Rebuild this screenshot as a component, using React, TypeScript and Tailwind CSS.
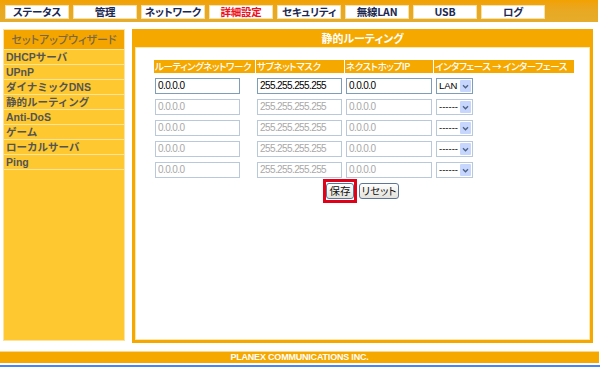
import React from "react";

const jp = "font-['Noto_Sans_CJK_JP','Noto_Sans',sans-serif] [font-feature-settings:'palt']";
const latin = "font-['Liberation_Sans','Noto_Sans_CJK_JP',sans-serif]";

const tabs = [
  { label: "ステータス" },
  { label: "管理" },
  { label: "ネットワーク" },
  { label: "詳細設定", active: true },
  { label: "セキュリティ" },
  { label: "無線LAN" },
  { label: "USB" },
  { label: "ログ" },
];

const menu = [
  "DHCPサーバ",
  "UPnP",
  "ダイナミックDNS",
  "静的ルーティング",
  "Anti-DoS",
  "ゲーム",
  "ローカルサーバ",
  "Ping",
];

const headers = [
  "ルーティングネットワーク",
  "サブネットマスク",
  "ネクストホップIP",
  "インタフェース → インターフェース",
];

function TextBox({ value, disabled, width }: { value: string; disabled?: boolean; width: string }) {
  return (
    <div
      className={`${width} ml-[1px] h-[16px] border flex items-center pl-[2px] bg-white ${latin} text-[10px] tracking-[-0.6px] leading-none ${
        disabled ? "border-[#b9c9d9] text-[#a8a8a8]" : "border-[#7f9db9] text-black"
      }`}
    >
      {value}
    </div>
  );
}

function Select({ value, disabled }: { value: string; disabled?: boolean }) {
  return (
    <div
      className={`ml-[2px] w-[37px] h-[16px] border flex items-stretch bg-white ${
        disabled ? "border-[#b9c9d9]" : "border-[#7f9db9]"
      }`}
    >
      <div className={`flex-1 flex items-center pl-[2px] ${latin} text-[9.5px] leading-none text-black`}>
        {value}
      </div>
      <div className="w-[11px] m-[1px] bg-[#c6d6fc] rounded-[1px] flex items-center justify-center">
        <svg viewBox="0 0 8 6" className="w-[7px] h-[5px]" fill="none">
          <path d="M1 1.5 L4 4.5 L7 1.5" stroke="#4d6185" strokeWidth="1.6" />
        </svg>
      </div>
    </div>
  );
}

function XpButton({ children, className = "" }: { children: React.ReactNode; className?: string }) {
  return (
    <div
      className={`h-[16px] border border-[#5c7598] rounded-[3px] bg-gradient-to-b from-white to-[#e3e3dc] flex items-center justify-center ${jp} text-[10.5px] leading-none text-[#111] ${className}`}
    >
      {children}
    </div>
  );
}

export default function App() {
  const rows = [
    { net: "0.0.0.0", mask: "255.255.255.255", hop: "0.0.0.0", iface: "LAN", disabled: false },
    { net: "0.0.0.0", mask: "255.255.255.255", hop: "0.0.0.0", iface: "------", disabled: true },
    { net: "0.0.0.0", mask: "255.255.255.255", hop: "0.0.0.0", iface: "------", disabled: true },
    { net: "0.0.0.0", mask: "255.255.255.255", hop: "0.0.0.0", iface: "------", disabled: true },
    { net: "0.0.0.0", mask: "255.255.255.255", hop: "0.0.0.0", iface: "------", disabled: true },
  ];

  return (
    <div className="w-[600px] h-[367px] bg-white overflow-hidden flex flex-col">
      {/* top navigation */}
      <div className="w-[598px] h-[22px] bg-gradient-to-b from-[#f2a100] via-[#e8a922] to-[#e6ac2c] flex gap-[4px] pl-[5px] pt-[5px]">
        {tabs.map((t) => (
          <div
            key={t.label}
            className={`w-[64px] h-[14px] bg-white border border-[#f6e2a8] flex items-center justify-center ${jp} text-[10.5px] font-bold tracking-[-0.2px] leading-none ${
              t.active ? "text-[#ee1020]" : "text-[#1b2850]"
            }`}
          >
            {t.label}
          </div>
        ))}
      </div>

      <div className="flex mt-[7px] pl-[3px] gap-[7px] items-start">
        {/* side menu */}
        <div className="w-[122px] h-[312px] bg-[#fdc830] border border-[#fde3a0] flex flex-col">
          <div className={`h-[19px] bg-[#f5a500] flex items-center justify-center ${jp} text-[11px] font-medium text-[#7a6842] leading-none`}>
            セットアップウィザード
          </div>
          {menu.map((m) => (
            <div
              key={m}
              className={`h-[15px] border-t border-[#fde49a] flex items-center pl-[2px] ${latin} text-[10.5px] font-bold text-[#545454] leading-none`}
            >
              {m}
            </div>
          ))}
          <div className="border-t border-[#fde49a]" />
        </div>

        {/* main panel */}
        <div className="w-[461px] h-[314px] border-x-[3px] border-b-[3px] border-[#f5a800] flex flex-col">
          <div className={`h-[18px] bg-[#f5a800] flex items-center justify-center ${jp} text-[11px] font-bold text-white leading-none`}>
            静的ルーティング
          </div>
          <div className="flex-1 bg-white pl-[18px] pt-[12px] border border-[#fde6b0]">
            <div className="grid grid-cols-[101px_88px_88px_140px] gap-x-[1px] gap-y-[5px]">
              {headers.map((h) => (
                <div
                  key={h}
                  className={`h-[13px] bg-[#f5a800] flex items-center pl-[1px] ${jp} text-[9.5px] font-medium tracking-[-0.4px] text-white leading-none whitespace-nowrap overflow-hidden`}
                >
                  {h}
                </div>
              ))}
              {rows.map((r, i) => (
                <React.Fragment key={i}>
                  <div>
                    <TextBox value={r.net} disabled={r.disabled} width="w-[85px]" />
                  </div>
                  <div>
                    <TextBox value={r.mask} disabled={r.disabled} width="w-[85px]" />
                  </div>
                  <div>
                    <TextBox value={r.hop} disabled={r.disabled} width="w-[86px]" />
                  </div>
                  <div>
                    <Select value={r.iface} disabled={r.disabled} />
                  </div>
                </React.Fragment>
              ))}
            </div>
            <div className="flex items-center gap-[2px] ml-[169px] mt-[1px]">
              <div className="border-[3px] border-[#e00018] py-[1px]">
                <XpButton className="w-[28px]">保存</XpButton>
              </div>
              <XpButton className="w-[40px]">リセット</XpButton>
            </div>
          </div>
        </div>
      </div>

      {/* footer */}
      <div className={`mt-[8px] w-[599px] h-[12px] bg-[#f5a800] border-t border-[#fcd98a] flex items-center justify-center ${latin} text-[9px] font-bold tracking-[-0.2px] text-white leading-none`}>
        PLANEX COMMUNICATIONS INC.
      </div>
      <div className="mt-[2px] h-[2px] bg-[#4a86f0]" />
    </div>
  );
}
